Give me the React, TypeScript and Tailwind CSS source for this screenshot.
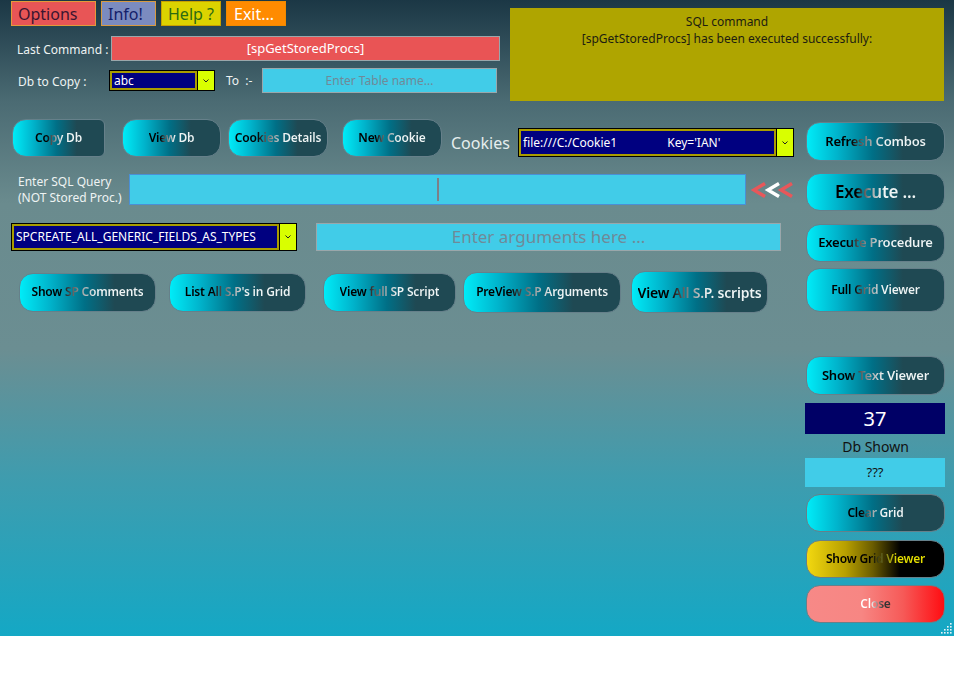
import React from "react";

type Variant = "cyan" | "gold" | "close";

const bgByVariant: Record<Variant, string> = {
  cyan: "bg-[linear-gradient(90deg,#00ecf8_0%,#00b4cc_22%,#006f86_48%,#1f4953_70%,#1f4953_100%)]",
  gold: "bg-[linear-gradient(90deg,#f2d810_0%,#b8a000_28%,#6a5c00_48%,#000_68%,#000_100%)]",
  close: "bg-[linear-gradient(90deg,#f78987_0%,#f78683_40%,#f65a58_70%,#ff0d12_100%)]",
};

const textByVariant: Record<Variant, string> = {
  cyan: "bg-[linear-gradient(90deg,#000_0%,#000_26%,#8a8f90_42%,#eef4f4_58%,#eef4f4_100%)]",
  gold: "bg-[linear-gradient(90deg,#000_0%,#000_45%,#6a6a20_58%,#e6e000_72%,#e6e000_100%)]",
  close: "bg-[linear-gradient(90deg,#fff_0%,#fff_35%,#9a8a8a_55%,#333_75%,#333_100%)]",
};

function GradButton({
  label,
  className,
  text = "text-[12px]",
  variant = "cyan",
}: {
  label: string;
  className: string;
  text?: string;
  variant?: Variant;
}) {
  return (
    <div
      className={`flex shrink-0 items-center justify-center border border-[#66808a] ${bgByVariant[variant]} ${className}`}
    >
      <span
        className={`inline-block bg-clip-text font-semibold tracking-[-0.2px] text-transparent ${textByVariant[variant]} ${text}`}
      >
        {label}
      </span>
    </div>
  );
}

function Combo({
  value,
  className,
  text = "text-[12px]",
}: {
  value: React.ReactNode;
  className: string;
  text?: string;
}) {
  return (
    <div className={`flex shrink-0 border border-black bg-black ${className}`}>
      <div className="flex flex-1 items-center overflow-hidden whitespace-nowrap border-2 border-[#a99c00] bg-[#000080] pl-[2px] text-white">
        <span className={text}>{value}</span>
      </div>
      <div className="ml-[1px] flex w-[16px] items-center justify-center bg-[#d9ff00]">
        <svg width="6" height="4" viewBox="0 0 6 4" aria-hidden="true">
          <path d="M0.5 0.5L3 3L5.5 0.5" fill="none" stroke="#222" strokeWidth="1" />
        </svg>
      </div>
    </div>
  );
}

function Arrows() {
  return (
    <svg width="42" height="16" viewBox="0 0 42 16" aria-hidden="true">
      <polyline points="14,1.5 3,8 14,14.5" fill="none" stroke="#e8575a" strokeWidth="3.4" />
      <polyline points="28,1.5 17,8 28,14.5" fill="none" stroke="#ffffff" strokeWidth="3.4" />
      <polyline points="41,1.5 30,8 41,14.5" fill="none" stroke="#e8575a" strokeWidth="3.4" />
    </svg>
  );
}

export default function App() {
  return (
    <div className="h-[675px] w-[970px] bg-white font-['Noto_Sans',sans-serif]">
      <div className="relative h-[636px] w-[954px] overflow-hidden bg-[linear-gradient(180deg,#1b3745_0%,#4b6b73_16%,#6a8b8e_32%,#6b8e92_55%,#3f9cae_75%,#14a8c5_100%)]">
        {/* top area */}
        <div className="flex h-[119px]">
          <div className="w-[510px] pl-[11px] pt-[1px]">
            <div className="flex h-[25px] gap-[5px] text-[16px] leading-none">
              <div className="flex w-[85px] items-center border border-[#e39a3a] bg-[#e85556] pl-[6px] text-[#3b1530]">
                Options
              </div>
              <div className="flex w-[55px] items-center border border-[#d89a40] bg-[#7b8bbf] pl-[6px] text-[#13206a]">
                Info!
              </div>
              <div className="flex w-[60px] items-center border border-[#c8a000] bg-[#dcd300] pl-[6px] text-[#2d6a12]">
                Help ?
              </div>
              <div className="flex w-[60px] items-center border border-[#f08a00] bg-[#ff8b00] pl-[7px] text-white">
                Exit...
              </div>
            </div>

            <div className="mt-[10px] flex h-[25px] items-center">
              <div className="mt-[3px] w-[100px] pl-[6px] text-[12px] text-[#eef3f3]">Last Command :</div>
              <div className="flex h-[25px] w-[389px] items-center justify-center border border-[#9aa7ab] bg-[#e95455] text-[13px] text-white">
                [spGetStoredProcs]
              </div>
            </div>

            <div className="mt-[7px] flex h-[25px] items-center">
              <div className="mt-[2px] w-[98px] pl-[7px] text-[12px] text-[#eef3f3]">Db to Copy :</div>
              <Combo value="abc" className="h-[21px] w-[106px]" />
              <div className="ml-[11px] w-[36px] text-[12px] text-[#eef3f3]">To&nbsp; :-</div>
              <div className="flex h-[25px] w-[235px] items-center justify-center border border-[#9aa7ab] bg-[#41cce8] text-[12px] text-[#6f8a98]">
                Enter Table name...
              </div>
            </div>
          </div>

          <div className="mt-[8px] flex h-[93px] w-[434px] flex-col items-center bg-[#afa500] pt-[5px] text-[12px] leading-[17px] text-[#1d1d10]">
            <div>SQL command</div>
            <div>[spGetStoredProcs] has been executed successfully:</div>
          </div>
        </div>

        {/* body */}
        <div className="flex">
          <div className="w-[795px]">
            <div className="flex h-[38px] items-start">
              <GradButton label="Copy Db" className="ml-[12px] h-[38px] w-[93px] rounded-l-[14px] rounded-r-[6px]" />
              <GradButton label="View Db" className="ml-[17px] h-[38px] w-[99px] rounded-[14px]" />
              <GradButton label="Cookies Details" className="ml-[7px] h-[38px] w-[100px] rounded-[14px]" />
              <GradButton label="New Cookie" className="ml-[14px] h-[38px] w-[100px] rounded-[14px]" />
              <div className="ml-[9px] mt-[16px] w-[67px] text-[16px] leading-none text-[#e6eeee]">Cookies</div>
              <Combo
                value={
                  <>
                    file:///C:/Cookie1
                    <span className="ml-[50px]">Key='IAN'</span>
                  </>
                }
                className="mt-[9px] h-[29px] w-[276px]"
              />
            </div>

            <div className="mt-[17px] flex h-[31px] items-center">
              <div className="w-[129px] pl-[18px] text-[12px] leading-[16px] text-[#eef3f3]">
                <div>Enter SQL Query</div>
                <div>(NOT Stored Proc.)</div>
              </div>
              <div className="relative h-[31px] w-[617px] border border-[#4a8fd6] bg-[#41cce8]">
                <div className="absolute left-[307px] top-[3px] h-[23px] w-[2px] bg-[#7d8088]" />
              </div>
              <div className="ml-[5px] mt-[1px]">
                <Arrows />
              </div>
            </div>

            <div className="mt-[18px] flex h-[28px] items-center">
              <Combo value="SPCREATE_ALL_GENERIC_FIELDS_AS_TYPES" className="ml-[11px] h-[28px] w-[286px]" />
              <div className="ml-[19px] flex h-[28px] w-[465px] items-center justify-center border border-[#9aa7ab] bg-[#41cce8] text-[17px] text-[#6f8a98]">
                Enter arguments here ...
              </div>
            </div>

            <div className="mt-[20px] flex h-[42px] items-center">
              <GradButton label="Show SP Comments" className="ml-[19px] h-[39px] w-[137px] rounded-[14px]" />
              <GradButton label="List All S.P's in Grid" className="ml-[13px] h-[39px] w-[137px] rounded-[14px]" />
              <GradButton label="View full SP Script" className="ml-[17px] h-[39px] w-[133px] rounded-[14px]" />
              <GradButton label="PreView  S.P Arguments" className="ml-[7px] h-[41px] w-[158px] rounded-[14px]" />
              <GradButton label="View All S.P. scripts" text="text-[14px]" className="ml-[10px] h-[42px] w-[137px] rounded-[14px]" />
            </div>
          </div>

          <div className="ml-[11px] flex w-[139px] flex-col pt-[3px]">
            <GradButton label="Refresh Combos" text="text-[13px]" className="h-[39px] rounded-[14px]" />
            <GradButton label="Execute ..." text="text-[17px]" className="mt-[12px] h-[38px] rounded-[14px]" />
            <GradButton label="Execute Procedure" text="text-[13px]" className="mt-[13px] h-[38px] rounded-[14px]" />
            <GradButton label="Full Grid Viewer" className="mt-[6px] h-[44px] rounded-[14px]" />
            <GradButton label="Show Text Viewer" text="text-[13px]" className="mt-[44px] h-[39px] rounded-[14px]" />
            <div className="-ml-[1px] mt-[8px] flex h-[31px] w-[140px] items-center justify-center bg-[#000066] text-[20px] text-white">
              37
            </div>
            <div className="flex h-[24px] items-center justify-center text-[14px] text-[#111]">Db Shown</div>
            <div className="-ml-[1px] flex h-[29px] w-[140px] items-center justify-center bg-[#41cce8] text-[13px] text-[#111]">
              ???
            </div>
            <GradButton label="Clear Grid" className="mt-[7px] h-[38px] rounded-[14px]" />
            <GradButton label="Show Grid Viewer" variant="gold" className="mt-[8px] h-[38px] rounded-[14px]" />
            <GradButton label="Close" variant="close" className="mt-[7px] h-[38px] rounded-[14px]" />
          </div>
        </div>

        <svg className="absolute bottom-[2px] right-[2px]" width="11" height="11" viewBox="0 0 11 11" aria-hidden="true">
          {[
            [9, 1],
            [9, 4],
            [6, 4],
            [9, 7],
            [6, 7],
            [3, 7],
            [9, 10],
            [6, 10],
            [3, 10],
            [0, 10],
          ].map(([x, y]) => (
            <rect key={`${x}-${y}`} x={x} y={y - 1} width="1.6" height="1.6" fill="#e8f4f8" />
          ))}
        </svg>
      </div>
    </div>
  );
}
